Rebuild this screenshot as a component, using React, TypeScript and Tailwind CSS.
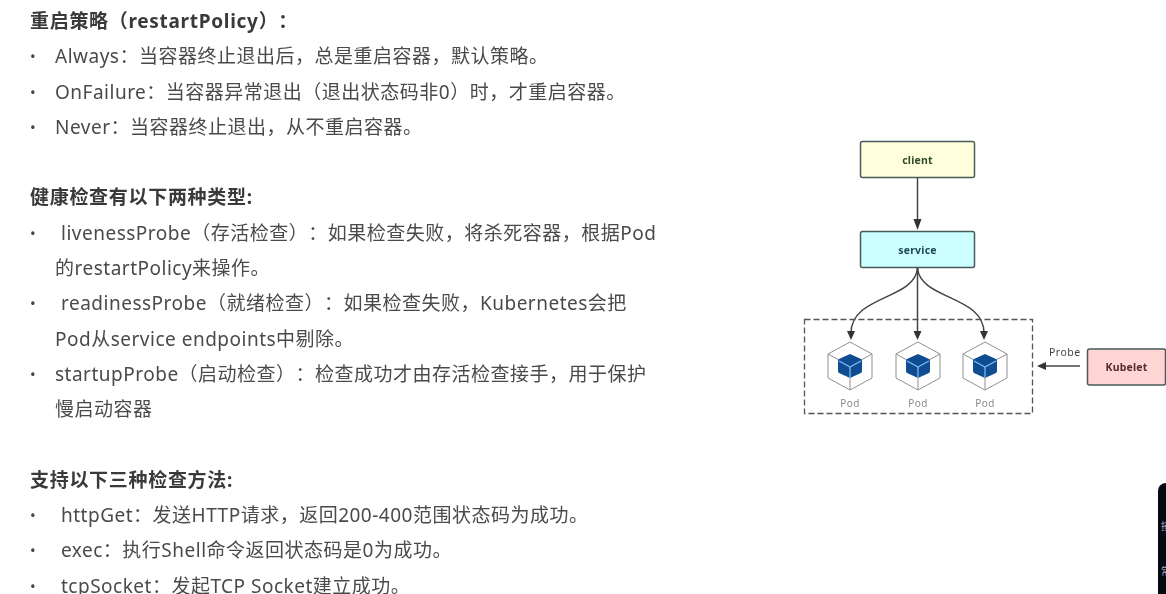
// K8s 探针笔记页面
type Line = { text: string; more?: string; indent?: boolean };

type Section = { title: string; items: Line[] };

const SECTIONS: Section[] = [
  {
    title: '重启策略（restartPolicy）：',
    items: [
      { text: 'Always：当容器终止退出后，总是重启容器，默认策略。' },
      { text: 'OnFailure：当容器异常退出（退出状态码非0）时，才重启容器。' },
      { text: 'Never：当容器终止退出，从不重启容器。' },
    ],
  },
  {
    title: '健康检查有以下两种类型:',
    items: [
      { text: 'livenessProbe（存活检查）：如果检查失败，将杀死容器，根据Pod', more: '的restartPolicy来操作。', indent: true },
      { text: 'readinessProbe（就绪检查）：如果检查失败，Kubernetes会把', more: 'Pod从service endpoints中剔除。', indent: true },
      { text: 'startupProbe（启动检查）：检查成功才由存活检查接手，用于保护', more: '慢启动容器' },
    ],
  },
  {
    title: '支持以下三种检查方法:',
    items: [
      { text: 'httpGet：发送HTTP请求，返回200-400范围状态码为成功。', indent: true },
      { text: 'exec：执行Shell命令返回状态码是0为成功。', indent: true },
      { text: 'tcpSocket：发起TCP Socket建立成功。', indent: true },
    ],
  },
];

const POD_X = [850, 918, 985];

function Pod({ x }: { x: number }) {
  return (
    <g>
      <path
        d={`M${x} 342 L${x + 22} 354 V378 L${x} 390 L${x - 22} 378 V354 Z M${x - 22} 354 L${x} 366 L${x + 22} 354 M${x} 366 V390`}
        fill="#fff"
        stroke="#8f8f8f"
        strokeWidth="1"
      />
      <path d={`M${x} 354 L${x + 11} 359 Q${x + 12} 360 ${x + 12} 361 V371 Q${x + 12} 372 ${x + 11} 373 L${x} 378 L${x - 11} 373 Q${x - 12} 372 ${x - 12} 371 V361 Q${x - 12} 360 ${x - 11} 359 Z`} fill="#0f4c92" />
      <path d={`M${x - 11} 361 L${x} 367 L${x + 11} 361 M${x} 367 V378`} fill="none" stroke="#7fc0ee" strokeWidth="1.2" />
      <text x={x} y="407" textAnchor="middle" fontSize="10" letterSpacing="0.5" fill="#8a8a8a">
        Pod
      </text>
    </g>
  );
}

function Box({ x, y, w, fill, label, color }: { x: number; y: number; w: number; fill: string; label: string; color: string }) {
  return (
    <g>
      <rect x={x} y={y} width={w} height="36" rx="2" fill={fill} stroke="#4a5a58" strokeWidth="1.5" />
      <text x={x + w / 2} y={y + 22} textAnchor="middle" fontSize="10.5" letterSpacing="0.2" fontWeight="700" fill={color}>
        {label}
      </text>
    </g>
  );
}

function Diagram() {
  return (
    <svg
      viewBox="790 130 376 300"
      className="w-[376px] h-[300px] shrink-0 mt-[130px] blur-[0.7px] font-['Noto_Sans',sans-serif]"
    >
      <Box x={860.5} y={141.5} w={114} fill="#ffffdc" label="client" color="#2f4a2a" />
      <Box x={860.5} y={231.5} w={114} fill="#ccffff" label="service" color="#1f4a55" />

      {/* 连接线 */}
      <g fill="none" stroke="#444" strokeWidth="1.5">
        <path d="M917.5 178 V224" />
        <path d="M917.5 268 C915 300 851 295 851 333" />
        <path d="M917.5 268 V333" />
        <path d="M917.5 268 C920 300 984 295 984 333" />
        <path d="M1080 366 H1044" />
      </g>
      <g fill="#333">
        <path d="M913.5 219 H921.5 L917.5 230 Z" />
        <path d="M847 331 H855 L851 340 Z" />
        <path d="M913.5 331 H921.5 L917.5 340 Z" />
        <path d="M980 331 H988 L984 340 Z" />
        <path d="M1046 362 V370 L1037 366 Z" />
      </g>

      <rect x="804.5" y="319.5" width="228" height="94" fill="none" stroke="#555" strokeWidth="1.3" strokeDasharray="6 3" />
      {POD_X.map(x => (
        <Pod key={x} x={x} />
      ))}

      <text x="1049" y="356" fontSize="10.5" letterSpacing="0.5" fill="#444">
        Probe
      </text>
      <Box x={1087.5} y={349} w={78} fill="#ffd5d5" label="Kubelet" color="#5a2a2a" />
    </svg>
  );
}

export default function App() {
  return (
    <div className="relative flex w-[1166px] h-[594px] overflow-hidden bg-white font-['Noto_Sans','Noto_Sans_CJK_SC',sans-serif]">
      {/* 左侧文字 */}
      <div className="w-[790px] shrink-0 pl-[30px] pt-[4px] text-[19px] leading-[35.3px] tracking-[0.5px] text-[#4a4a4a] blur-[0.5px] [text-spacing-trim:space-all]">
        {SECTIONS.map(section => (
          <section key={section.title} className="mb-[35.3px]">
            <h2 className="text-[19px] font-bold tracking-[0.7px] text-[#3a3a3a]">{section.title}</h2>
            <ul>
              {section.items.map(item => (
                <li key={item.text} className="flex">
                  <span className="w-[25px] shrink-0 text-[15px] text-[#444]">•</span>
                  <div className={item.indent ? 'indent-[6px]' : ''}>
                    {item.text}
                    {item.more && (
                      <>
                        <br />
                        <span className="block indent-0">{item.more}</span>
                      </>
                    )}
                  </div>
                </li>
              ))}
            </ul>
          </section>
        ))}
      </div>

      <Diagram />

      {/* 右下角悬浮面板 */}
      <div className="absolute right-0 bottom-0 w-[8px] h-[111px] rounded-tl-[8px] bg-[#050a14] overflow-hidden text-[10px] text-[#aab0bb]">
        <div className="mt-[36px] ml-[3px] w-[20px]">接</div>
        <div className="mt-[30px] ml-[3px] w-[20px]">常</div>
      </div>
    </div>
  );
}
